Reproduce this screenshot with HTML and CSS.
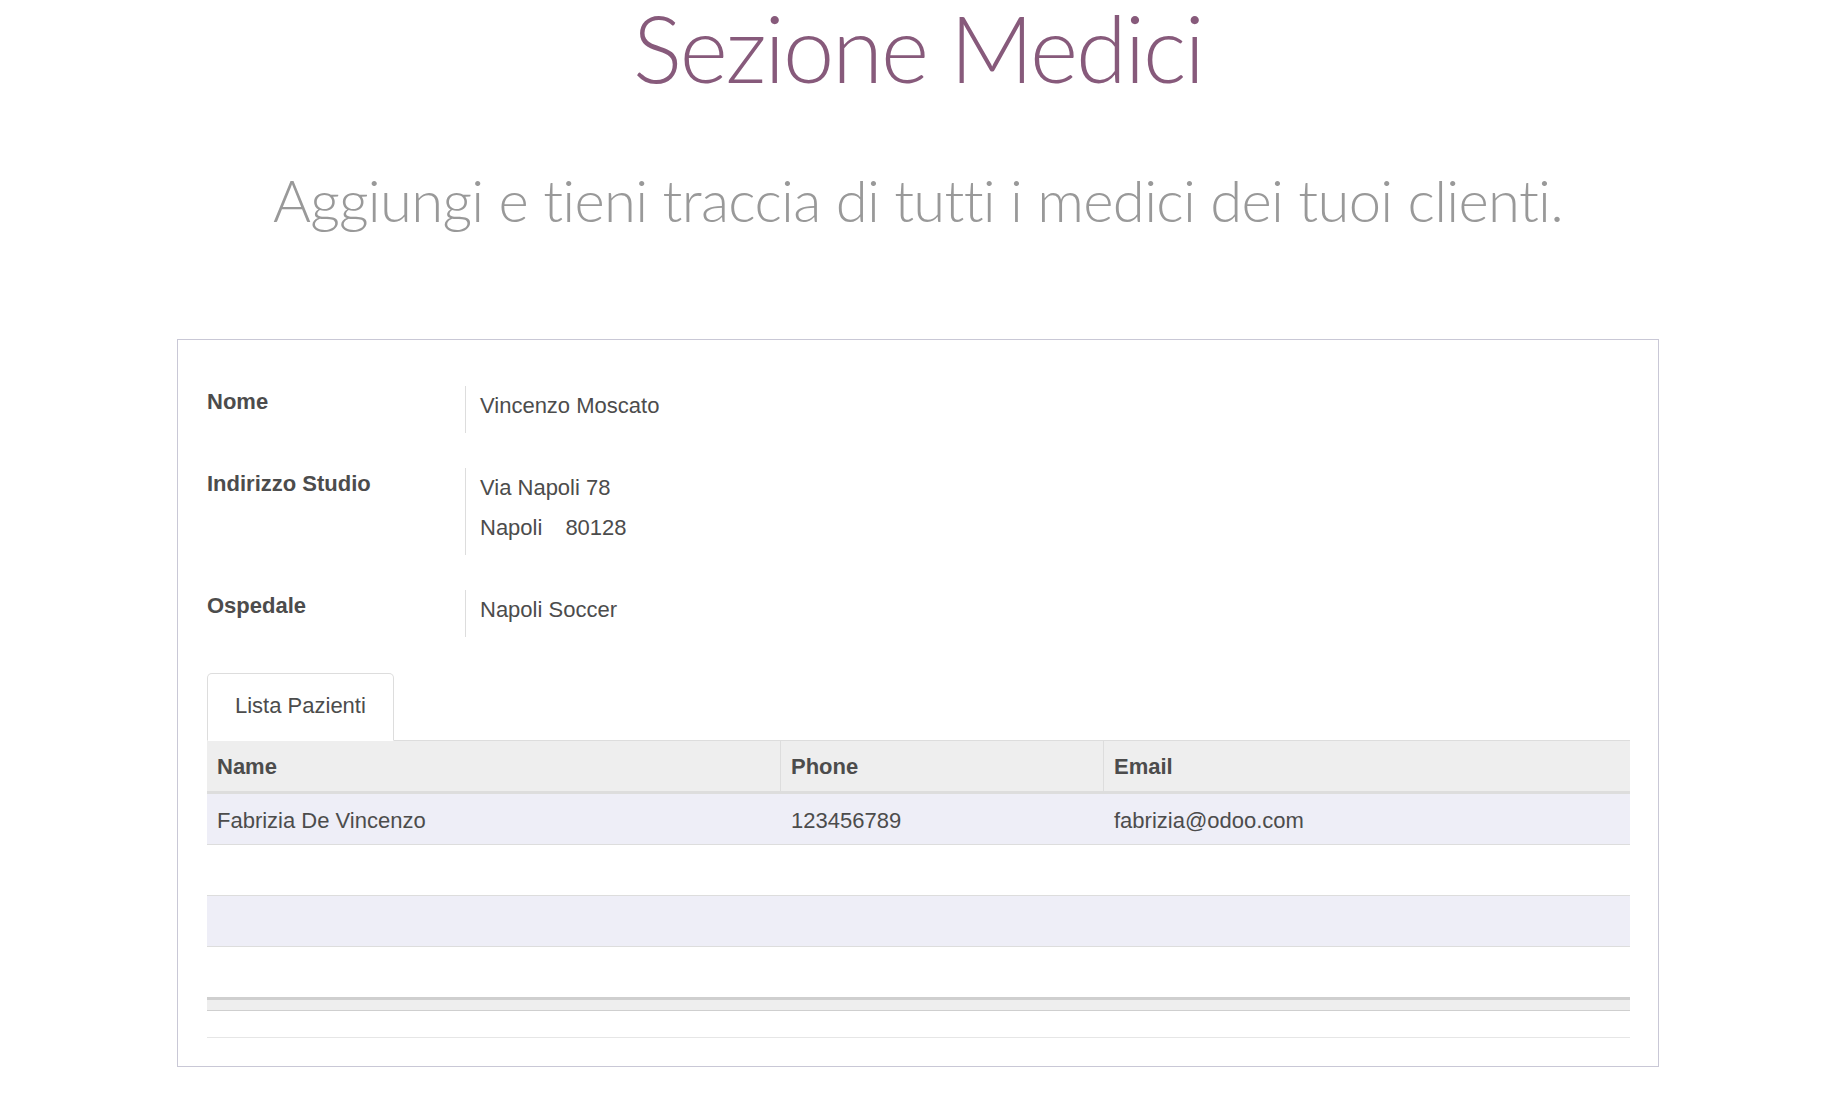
FILE: index.html
```html
<!DOCTYPE html>
<html lang="it">
<head>
<meta charset="utf-8">
<title>Sezione Medici</title>
<link rel="stylesheet" href="styles.css">
</head>
<body>
<header class="hero">
  <h1 class="title">Sezione Medici</h1>
  <p class="subtitle">Aggiungi e tieni traccia di tutti i medici dei tuoi clienti.</p>
</header>
<section class="sheet">
  <div class="fields">
    <div class="field">
      <div class="label">Nome</div>
      <div class="value">Vincenzo Moscato</div>
    </div>
    <div class="field">
      <div class="label">Indirizzo Studio</div>
      <div class="value">
        <div class="line">Via Napoli 78</div>
        <div class="line"><span>Napoli</span><span class="zip">80128</span></div>
      </div>
    </div>
    <div class="field">
      <div class="label">Ospedale</div>
      <div class="value">Napoli Soccer</div>
    </div>
  </div>
  <div class="notebook">
    <ul class="tabs">
      <li class="tab">Lista Pazienti</li>
    </ul>
    <table class="list">
      <colgroup>
        <col class="col-name">
        <col class="col-phone">
        <col class="col-email">
      </colgroup>
      <thead>
        <tr><th>Name</th><th class="sep">Phone</th><th class="sep">Email</th></tr>
      </thead>
      <tbody>
        <tr><td>Fabrizia De Vincenzo</td><td>123456789</td><td>fabrizia@odoo.com</td></tr>
        <tr><td>&nbsp;</td><td>&nbsp;</td><td>&nbsp;</td></tr>
        <tr><td>&nbsp;</td><td>&nbsp;</td><td>&nbsp;</td></tr>
        <tr><td>&nbsp;</td><td>&nbsp;</td><td>&nbsp;</td></tr>
      </tbody>
      <tfoot>
        <tr><td colspan="3"><div class="foot"></div></td></tr>
      </tfoot>
    </table>
    <div class="rule"></div>
  </div>
</section>
</body>
</html>
```

FILE: styles.css
```css
html, body {
  margin: 0;
  padding: 0;
  background: #ffffff;
}

body {
  font-family: "Liberation Sans", Arial, sans-serif;
  color: #4c4c4c;
}

.hero {
  text-align: center;
}

.title {
  font-family: Lato, "Open Sans", sans-serif;
  font-weight: 300;
  font-size: 92px;
  line-height: 1;
  letter-spacing: -2px;
  font-variant-ligatures: none;
  margin: 2px 0 0;
  color: #875a7b;
}

.subtitle {
  font-family: Lato, "Open Sans", sans-serif;
  font-weight: 300;
  font-size: 58px;
  line-height: 1;
  letter-spacing: -0.7px;
  font-variant-ligatures: none;
  margin: 77px 0 0;
  color: #999999;
}

.sheet {
  box-sizing: border-box;
  width: 1482px;
  margin: 110px auto 0;
  border: 1px solid #c9c8d6;
  padding: 46px 28px 28px 29px;
}

.fields {
  display: flex;
  flex-direction: column;
  gap: 34.5px;
}

.field {
  display: grid;
  grid-template-columns: 258px 1fr;
  font-size: 22px;
  line-height: 31.4px;
}

.label {
  font-weight: bold;
}

.value {
  border-left: 1px solid #dddddd;
  padding: 4px 0 12px 14px;
}

.value .line + .line {
  margin-top: 8.6px;
}

.zip {
  margin-left: 23px;
}

.notebook {
  margin-top: 35.6px;
}

.tabs {
  list-style: none;
  margin: 0;
  padding: 0;
  display: flex;
  border-bottom: 1px solid #dddddd;
}

.tab {
  font-size: 22px;
  line-height: 31.4px;
  padding: 16px 27px 19px;
  border: 1px solid #dddddd;
  border-bottom-color: transparent;
  border-radius: 5px 5px 0 0;
  margin-bottom: -1px;
  background: #ffffff;
  color: #4c4c4c;
}

.list {
  width: 100%;
  table-layout: fixed;
  border-collapse: separate;
  border-spacing: 0;
  font-size: 22px;
  line-height: 31.4px;
}

.col-name { width: 573px; }
.col-phone { width: 323px; }

.list th {
  background: #eeeeee;
  text-align: left;
  font-weight: bold;
  padding: 10px 10px 8.6px;
  border-bottom: 2px solid #dddddd;
}

.list th.sep {
  border-left: 1px solid #dddddd;
  padding-left: 10px;
}

.list tbody td {
  padding: 10.4px 10px 8.2px;
  border-top: 1px solid #dddddd;
  white-space: nowrap;
}

.list tbody tr:nth-child(odd) td {
  background: #eeeef7;
}

.list tbody td + td {
  padding-left: 11px;
}

.list tfoot td {
  padding: 0;
  border-top: 3px solid #cfcfcf;
  border-bottom: 1px solid #cfcfcf;
  background: #eeeeee;
}

.foot {
  height: 10px;
}

.rule {
  margin-top: 26px;
  border-top: 1px solid #e6e6e6;
}
```
